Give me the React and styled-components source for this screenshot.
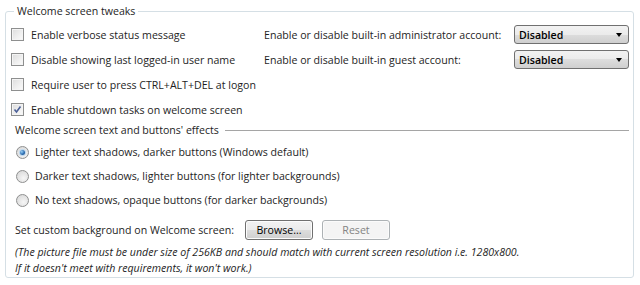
import React from 'react'
import styled, { createGlobalStyle } from 'styled-components'

const Global = createGlobalStyle`
  html, body {
    margin: 0;
    background: #ffffff;
  }
  body {
    font-family: "Segoe UI", "Open Sans", "Noto Sans", sans-serif;
    font-size: 10.6px;
    color: #1e1e1e;
  }
`

const Group = styled.fieldset`
  margin: 3px 6px 0 5px;
  padding: 3px 4px 2px 5px;
  border: 1px solid #d5dfe5;
  border-radius: 3px;
  min-width: 0;
  height: 275px;
  box-sizing: border-box;
`

const Legend = styled.legend`
  margin-left: 3px;
  padding: 0 3px 0 3px;
  line-height: 16px;
`

const Top = styled.div`
  display: flex;
`

const LeftCol = styled.div`
  flex: 0 0 253px;
  display: flex;
  flex-direction: column;
`

const RightCol = styled.div`
  flex: 1;
  min-width: 0;
  display: grid;
  grid-template-columns: 1fr 115px;
  grid-auto-rows: 25px;
  align-items: center;
  align-content: start;
`

const Row = styled.label`
  display: flex;
  align-items: center;
  height: ${p => p.h || 25}px;
  padding-left: ${p => p.indent || 0}px;
  white-space: nowrap;
`

const Box = styled.span`
  flex: 0 0 auto;
  width: 11px;
  height: 11px;
  margin-right: 7px;
  border: 1px solid #8e8f8f;
  background: linear-gradient(135deg, #dcdcdc 0%, #f0f0f0 60%, #fbfbfb 100%);
  box-shadow: inset 0 0 0 1px #f4f4f4;
  display: flex;
  align-items: center;
  justify-content: center;
`

const Radio = styled.span`
  flex: 0 0 auto;
  width: 11px;
  height: 11px;
  margin-right: 6px;
  border-radius: 50%;
  border: 1px solid #8e8f8f;
  background: radial-gradient(circle at 60% 65%, #f6f6f6 0%, #dedede 70%, #cfcfcf 100%);
  display: flex;
  align-items: center;
  justify-content: center;
`

const Dot = styled.span`
  width: 5px;
  height: 5px;
  border-radius: 50%;
  background: radial-gradient(circle at 35% 35%, #9ad0f5 0%, #2c6fb4 55%, #173e73 100%);
  box-shadow: 0 0 0 1px #bcd7ee;
`

const Label = styled.span`
  white-space: nowrap;
`

const Combo = styled.div`
  height: 19px;
  box-sizing: border-box;
  border: 1px solid #707070;
  border-radius: 3px;
  background: linear-gradient(#f2f2f2 0%, #ebebeb 50%, #dddddd 50%, #cfcfcf 100%);
  display: flex;
  align-items: center;
  justify-content: space-between;
  padding: 0 6px 0 4px;
  font-weight: 600;
  color: #000;
`

const Arrow = styled.span`
  width: 0;
  height: 0;
  border-left: 3.5px solid transparent;
  border-right: 3.5px solid transparent;
  border-top: 4px solid #000;
`

const Heading = styled.div`
  display: flex;
  align-items: center;
  height: 16px;
  padding-left: 4px;
  margin-bottom: 2px;
`

const Rule = styled.div`
  flex: 1;
  height: 1px;
  margin-left: 6px;
  background: #a5a5a5;
`

const BgRow = styled.div`
  display: grid;
  grid-template-columns: 221px 68px 68px;
  align-items: center;
  height: 22px;
  margin-top: 7px;
  padding-left: 4px;
  column-gap: 9px;
`

const Button = styled.button`
  width: 68px;
  height: 20px;
  box-sizing: border-box;
  border-radius: 3px;
  font: inherit;
  padding: 0;
  border: 1px solid ${p => (p.disabled ? '#adb2b5' : '#707070')};
  color: ${p => (p.disabled ? '#838383' : '#000')};
  background: ${p =>
    p.disabled
      ? '#f4f4f4'
      : 'linear-gradient(#f2f2f2 0%, #ebebeb 50%, #dddddd 50%, #cfcfcf 100%)'};
  box-shadow: inset 0 0 0 1px ${p => (p.disabled ? '#fbfbfb' : '#fcfcfc')};
`

const Note = styled.div`
  margin-top: 3px;
  padding-left: 4px;
  font-style: italic;
  line-height: 16px;
`

const Check = () => (
  <svg width="9" height="9" viewBox="0 0 9 9">
    <path d="M1.5 4.5 L3.5 7 L7.5 1.5" fill="none" stroke="#4a5f97" strokeWidth="1.6" />
  </svg>
)

const tweaks = [
  { text: 'Enable verbose status message', on: false },
  { text: 'Disable showing last logged-in user name', on: false },
  { text: 'Require user to press CTRL+ALT+DEL at logon', on: false },
  { text: 'Enable shutdown tasks on welcome screen', on: true },
]

const effects = [
  'Lighter text shadows, darker buttons (Windows default)',
  'Darker text shadows, lighter buttons (for lighter backgrounds)',
  'No text shadows, opaque buttons (for darker backgrounds)',
]

export default function App() {
  return (
    <>
      <Global />
      <Group>
        <Legend>Welcome screen tweaks</Legend>
        <Top>
          <LeftCol>
            {tweaks.map(t => (
              <Row key={t.text}>
                <Box>{t.on && <Check />}</Box>
                <Label>{t.text}</Label>
              </Row>
            ))}
          </LeftCol>
          <RightCol>
            <Label>Enable or disable built-in administrator account:</Label>
            <Combo>Disabled<Arrow /></Combo>
            <Label>Enable or disable built-in guest account:</Label>
            <Combo>Disabled<Arrow /></Combo>
          </RightCol>
        </Top>
        <Heading>
          Welcome screen text and buttons' effects
          <Rule />
        </Heading>
        {effects.map((e, i) => (
          <Row key={e} h={24} indent={5}>
            <Radio>{i === 0 && <Dot />}</Radio>
            <Label>{e}</Label>
          </Row>
        ))}
        <BgRow>
          <Label>Set custom background on Welcome screen:</Label>
          <Button>Browse...</Button>
          <Button disabled>Reset</Button>
        </BgRow>
        <Note>
          (The picture file must be under size of 256KB and should match with current screen resolution i.e. 1280x800.
          <br />
          If it doesn't meet with requirements, it won't work.)
        </Note>
      </Group>
    </>
  )
}
